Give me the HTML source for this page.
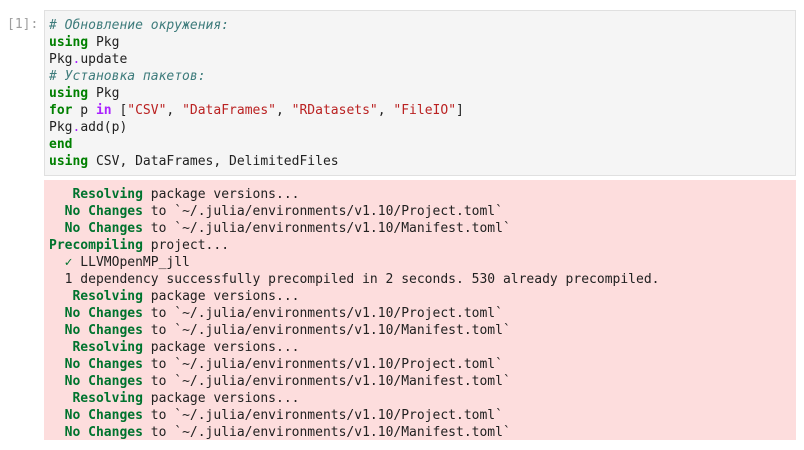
<!DOCTYPE html>
<html><head><meta charset="utf-8"><style>
body{margin:0;background:#fff;width:804px;height:450px;overflow:hidden;font-family:"DejaVu Sans Mono","Liberation Mono",monospace;font-size:13px;}
.prompt{position:absolute;left:7px;top:16px;color:#9e9e9e;line-height:17px;}
.code{position:absolute;left:44px;top:10px;width:750px;height:164px;background:#f5f5f5;border:1px solid #e0e0e0;}
.code pre,.out pre{margin:0;font:inherit;line-height:17px;white-space:pre;}
.code pre{padding:6px 0 0 4px;color:#212121;}
.out{position:absolute;left:44px;top:180px;width:752px;height:260px;background:#fddddd;}
.out pre{padding:6px 0 0 5px;color:#212121;}
.c{color:#3d7b7b;font-style:italic}
.k{color:#008000;font-weight:bold}
.o{color:#aa22ff;font-weight:bold}
.s{color:#ba2121}
.p{color:#aa22ff}
.g{color:#00732e;font-weight:bold}
</style></head><body>
<div class="prompt">[1]:</div>
<div class="code"><pre><span class="c"># Обновление окружения:</span>
<span class="k">using</span> Pkg
Pkg<span class="p">.</span>update
<span class="c"># Установка пакетов:</span>
<span class="k">using</span> Pkg
<span class="k">for</span> p <span class="o">in</span> [<span class="s">"CSV"</span>, <span class="s">"DataFrames"</span>, <span class="s">"RDatasets"</span>, <span class="s">"FileIO"</span>]
Pkg<span class="p">.</span>add(p)
<span class="k">end</span>
<span class="k">using</span> CSV, DataFrames, DelimitedFiles</pre></div>
<div class="out"><pre>   <span class="g">Resolving</span> package versions...
  <span class="g">No Changes</span> to `~/.julia/environments/v1.10/Project.toml`
  <span class="g">No Changes</span> to `~/.julia/environments/v1.10/Manifest.toml`
<span class="g">Precompiling</span> project...
  <span style="color:#00732e">✓</span> LLVMOpenMP_jll
  1 dependency successfully precompiled in 2 seconds. 530 already precompiled.
   <span class="g">Resolving</span> package versions...
  <span class="g">No Changes</span> to `~/.julia/environments/v1.10/Project.toml`
  <span class="g">No Changes</span> to `~/.julia/environments/v1.10/Manifest.toml`
   <span class="g">Resolving</span> package versions...
  <span class="g">No Changes</span> to `~/.julia/environments/v1.10/Project.toml`
  <span class="g">No Changes</span> to `~/.julia/environments/v1.10/Manifest.toml`
   <span class="g">Resolving</span> package versions...
  <span class="g">No Changes</span> to `~/.julia/environments/v1.10/Project.toml`
  <span class="g">No Changes</span> to `~/.julia/environments/v1.10/Manifest.toml`</pre></div>
</body></html>
